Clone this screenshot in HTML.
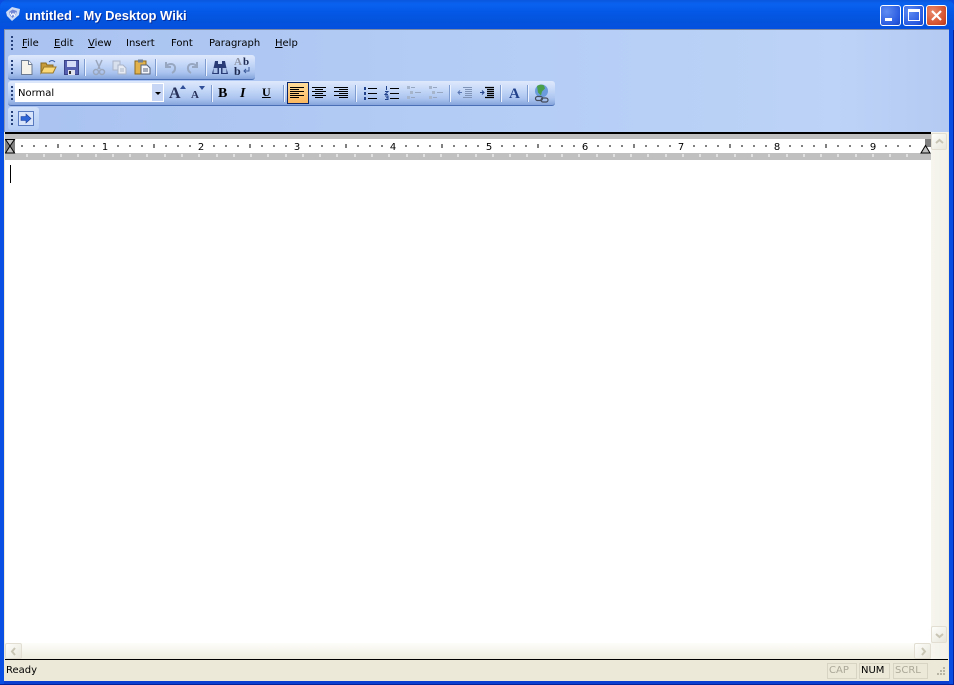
<!DOCTYPE html>
<html><head><meta charset="utf-8">
<style>
html,body{margin:0;padding:0;background:#fff}
#w{position:relative;width:954px;height:685px;overflow:hidden;background:#0a4be0;font-family:"DejaVu Sans","Liberation Sans",sans-serif;font-size:10px;color:#000}
#w div,#w svg,#w span{position:absolute}
.tb{background:linear-gradient(#dfe9fc,#c6d9f8 35%,#a9c3ef 75%,#86a5dc);border-radius:3px;border-bottom:1px solid #4a6fb4}
.m{top:37px;font-size:10px;line-height:13px;white-space:nowrap;color:#000}
.m u{text-decoration:underline}
.sep{width:1px;background:#7f9cd0;border-right:1px solid #eef4ff;height:17px}
.grip{width:2px;height:2px;background:#27417a;box-shadow:0 4px 0 #27417a,0 8px 0 #27417a,0 12px 0 #27417a}
.sb{top:663px;border:1px solid #d8d4c4;font-size:10px;line-height:14px;color:#aca899;padding-left:1px;box-sizing:border-box;height:16px}
.btn{border:1px solid #fff;border-radius:3px;box-sizing:border-box}
.sbtn{background:linear-gradient(135deg,#fdfdfb,#e8e6da);border:1px solid #e2dfd2;border-radius:2px;box-sizing:border-box}
</style></head><body><div id="w">
<!-- title bar -->
<div style="left:0;top:0;width:954px;height:30px;border-radius:7px 7px 0 0;background:linear-gradient(#0a57dc,#0a62f0 4px,#0458e6 12px,#0453dc 22px,#0550e0 30px)"></div>
<svg style="left:5px;top:6px" width="16" height="16" viewBox="0 0 16 16"><path d="M1 6L7 1l8 2-1 6-7 6-5-5z" fill="#cddbf5"/><path d="M4 6l3.500-2.500L12 5l-1 3.500L7.500 12 5 9.500z" fill="#7187d6"/><path d="M5 6.500l1.500 3 1.500-2 1.500 2 1-3" stroke="#fff" fill="none"/></svg>
<div style="left:25px;top:8px;font:bold 13px/16px 'Liberation Sans',sans-serif;color:#fff;white-space:nowrap;text-shadow:1px 1px 0 #0a2f9a">untitled - My Desktop Wiki</div>
<div class="btn" style="left:880px;top:5px;width:21px;height:21px;background:radial-gradient(circle at 30% 30%,#5f8cf2,#2a5be0 70%,#1a44c4)"><div style="left:4px;top:12px;width:7px;height:3px;background:#fff"></div></div>
<div class="btn" style="left:903px;top:5px;width:21px;height:21px;background:radial-gradient(circle at 30% 30%,#5f8cf2,#2a5be0 70%,#1a44c4)"><div style="left:4px;top:3px;width:12px;height:12px;border:1px solid #fff;border-top:3px solid #fff;box-sizing:border-box"></div></div>
<div class="btn" style="left:926px;top:5px;width:21px;height:21px;background:radial-gradient(circle at 30% 30%,#e8886a,#d5502c 70%,#b8381a)"><svg style="left:3px;top:3px" width="13" height="13" viewBox="0 0 13 13"><path d="M2 2l9 9M11 2l-9 9" stroke="#fff" stroke-width="2.200"/></svg></div>

<!-- client -->
<div style="left:4px;top:29px;width:945px;height:652px;background:#ece9d8"></div>
<div style="left:4px;top:29px;width:945px;height:1px;background:#7c8aa8"></div>
<div style="left:4px;top:30px;width:1px;height:102px;background:#8a97b4"></div>
<div style="left:5px;top:30px;width:944px;height:102px;background:linear-gradient(90deg,#a9c2f0,#b2ccf5 45%,#bdd3f7 88%,#b4caf2)"></div>

<!-- menu -->
<div class="grip" style="left:11px;top:36px"></div>
<div class="m" style="left:22px"><u>F</u>ile</div>
<div class="m" style="left:54px"><u>E</u>dit</div>
<div class="m" style="left:88px"><u>V</u>iew</div>
<div class="m" style="left:126px">Insert</div>
<div class="m" style="left:171px">Font</div>
<div class="m" style="left:209px">Paragraph</div>
<div class="m" style="left:275px"><u>H</u>elp</div>

<!-- toolbar 1 -->
<div class="tb" style="left:8px;top:55px;width:247px;height:24px"></div>
<div class="grip" style="left:11px;top:60px"></div>
<svg style="left:19px;top:59px" width="15" height="17" viewBox="0 0 15 17"><path d="M2.500 1.500h7l3.500 4v10h-10.500z" fill="#f6f4ea" stroke="#6c7a92"/><path d="M9.500 1.500v4h3.500" fill="#fff" stroke="#6c7a92"/></svg>
<svg style="left:40px;top:59px" width="17" height="16" viewBox="0 0 17 16"><path d="M1 4h5l1 2h6v3H4l-3 5z" fill="#c79b3a" stroke="#8a6a20"/><path d="M1 14l3-6h12l-3 6z" fill="#fbd978" stroke="#9c7a28"/><path d="M9 3c2-2 4-2 6 0" stroke="#3a5fa8" fill="none"/></svg>
<svg style="left:64px;top:60px" width="15" height="15" viewBox="0 0 15 15"><rect x=".5" y=".5" width="14" height="14" fill="#5560b0" stroke="#3a4288"/><rect x="3" y="1" width="9" height="6" fill="#d5def6"/><rect x="4" y="10" width="7" height="5" fill="#e0e2ee"/><rect x="5" y="11" width="2" height="3" fill="#333"/></svg>
<div class="sep" style="left:84px;top:59px"></div>
<svg style="left:92px;top:59px" width="14" height="17" viewBox="0 0 14 17"><path d="M4 1l4 9M10 1L6 10" stroke="#9aa6bc" stroke-width="1.500"/><circle cx="4" cy="13" r="2.500" fill="none" stroke="#9aa6bc" stroke-width="1.500"/><circle cx="10" cy="13" r="2.500" fill="none" stroke="#9aa6bc" stroke-width="1.500"/></svg>
<svg style="left:112px;top:60px" width="16" height="15" viewBox="0 0 16 15"><path d="M1 1h7v9H1z" fill="#d8e0ee" stroke="#aab4c8"/><path d="M6 5h5l3 3v6H6z" fill="#e6ebf4" stroke="#aab4c8"/><path d="M8 9h4M8 11h4" stroke="#aab4c8"/></svg>
<svg style="left:134px;top:59px" width="17" height="16" viewBox="0 0 17 16"><rect x="1" y="2" width="11" height="13" fill="#e2b34c" stroke="#8a6820"/><rect x="4" y="0.500" width="5" height="3" fill="#6f7f98"/><path d="M7 6h6l3 3v6H7z" fill="#f4f6fb" stroke="#55627c"/><path d="M9 10h5M9 12h5" stroke="#55627c"/></svg>
<div class="sep" style="left:155px;top:59px"></div>
<svg style="left:163px;top:60px" width="15" height="15" viewBox="0 0 15 15"><path d="M3 2v5h5M3 7c2-4 8-4 9 0 .5 3-1 5-3 6" fill="none" stroke="#97a7c2" stroke-width="2"/></svg>
<svg style="left:185px;top:60px" width="15" height="15" viewBox="0 0 15 15"><path d="M12 2v5H7M12 7c-2-4-8-4-9 0-.5 3 1 5 3 6" fill="none" stroke="#97a7c2" stroke-width="2"/></svg>
<div class="sep" style="left:205px;top:59px"></div>
<svg style="left:212px;top:60px" width="16" height="15" viewBox="0 0 16 15"><path d="M3 1h3v3h4V1h3l1 5 2 8H9V8H7v6H0l2-8z" fill="#2a3c78"/><rect x="1.500" y="8" width="4" height="5" fill="#a9c0e8"/><rect x="10.500" y="8" width="4" height="5" fill="#a9c0e8"/></svg>
<div style="left:234px;top:57px;font:bold 11px/10px 'Liberation Serif',serif;color:#8d93a4">A<span style="left:9px;top:0;color:#1e2a50">b</span></div>
<div style="left:234px;top:66px;font:bold 12px/10px 'Liberation Serif',serif;color:#1e2a50">b</div>
<svg style="left:242px;top:67px" width="9" height="8" viewBox="0 0 9 8"><path d="M7 0v4H2M4 2L2 4l2 2" stroke="#3d5a9a" fill="none"/></svg>

<!-- toolbar 2 -->
<div class="tb" style="left:8px;top:81px;width:547px;height:24px"></div>
<div class="grip" style="left:11px;top:86px"></div>
<div style="left:15px;top:83px;width:149px;height:19px;background:#fff"></div>
<div style="left:18px;top:87px;font-size:10px;line-height:13px;padding-top:0;margin-top:0"><span style="position:static">Normal</span></div>
<div style="left:152px;top:84px;width:11px;height:17px;background:#c6d6f4"></div>
<div style="left:155px;top:92px;width:0;height:0;border:3px solid transparent;border-top:3px solid #000"></div>
<div style="left:169px;top:85px;font:bold 16px/18px 'Liberation Serif',serif;color:#27315a">A</div>
<div style="left:180px;top:85px;width:0;height:0;border:3px solid transparent;border-bottom:4px solid #304f98;border-top:0"></div>
<div style="left:191px;top:88px;font:bold 11px/15px 'Liberation Serif',serif;color:#27315a">A</div>
<div style="left:199px;top:86px;width:0;height:0;border:3px solid transparent;border-top:4px solid #304f98;border-bottom:0"></div>
<div class="sep" style="left:211px;top:85px"></div>
<div style="left:218px;top:86px;font:bold 14px/15px 'Liberation Serif',serif">B</div>
<div style="left:240px;top:86px;font:italic bold 14px/15px 'Liberation Serif',serif">I</div>
<div style="left:262px;top:85px;font:bold 12px/15px 'Liberation Serif',serif;text-decoration:underline">U</div>
<div class="sep" style="left:283px;top:85px"></div>
<div style="left:287px;top:82px;width:22px;height:22px;box-sizing:border-box;background:linear-gradient(#fedc9a,#fbb860);border:1px solid #0a246a"></div>
<svg style="left:290px;top:86px" width="62" height="14" viewBox="0 0 62 14" stroke="#000" stroke-width="1"><path d="M0 1.500h14M0 3.500h9M0 5.500h14M0 7.500h9M0 9.500h14M0 11.500h9"/><path d="M22 1.500h14M25 3.500h8M22 5.500h14M25 7.500h8M22 9.500h14M25 11.500h8"/><path d="M44 1.500h14M49 3.500h9M44 5.500h14M49 7.500h9M44 9.500h14M49 11.500h9"/></svg>
<div class="sep" style="left:355px;top:85px"></div>
<svg style="left:362px;top:86px" width="16" height="14" viewBox="0 0 16 14"><path d="M6 2.500h9M6 7.500h9M6 12.500h9" stroke="#000"/><rect x="2" y="1" width="2" height="3" fill="#23428c"/><rect x="2" y="6" width="2" height="3" fill="#23428c"/><rect x="2" y="11" width="2" height="3" fill="#23428c"/></svg>
<svg style="left:384px;top:86px" width="16" height="14" viewBox="0 0 16 14"><path d="M6 2.500h9M6 7.500h9M6 12.500h9" stroke="#000"/><path d="M2.500 0v4M1 5.500h3l-3 3h3M1 10h3v3.500H1M2 11.700h2" stroke="#23428c" fill="none"/></svg>
<svg style="left:406px;top:86px" width="16" height="14" viewBox="0 0 16 14"><path d="M5 1.500h4M9 6.500h6M5 11.500h4" stroke="#97a7c2"/><rect x="1" y="0" width="3" height="3" fill="#a6b4cc"/><rect x="4" y="5" width="3" height="3" fill="#a6b4cc"/><rect x="1" y="10" width="3" height="3" fill="#a6b4cc"/></svg>
<svg style="left:428px;top:86px" width="16" height="14" viewBox="0 0 16 14"><path d="M5 1.500h4M9 6.500h6M5 11.500h4" stroke="#97a7c2"/><rect x="1" y="0" width="3" height="3" fill="#a6b4cc"/><rect x="4" y="5" width="3" height="3" fill="#a6b4cc"/><rect x="1" y="10" width="3" height="3" fill="#a6b4cc"/></svg>
<div class="sep" style="left:449px;top:85px"></div>
<svg style="left:457px;top:86px" width="16" height="14" viewBox="0 0 16 14"><path d="M6 1.500h9M8 3.500h7M8 5.500h7M8 7.500h7M8 9.500h7M6 11.500h9" stroke="#8094b8"/><path d="M5 6.500H1M3 4.500l-2 2 2 2" stroke="#5874b0" fill="none"/></svg>
<svg style="left:479px;top:86px" width="16" height="14" viewBox="0 0 16 14"><path d="M6 1.500h9M8 3.500h7M8 5.500h7M8 7.500h7M8 9.500h7M6 11.500h9" stroke="#000" stroke-width="1.200"/><path d="M1 6.500h4M3 4.500l2 2-2 2" stroke="#23428c" fill="none"/></svg>
<div class="sep" style="left:500px;top:85px"></div>
<div style="left:509px;top:86px;font:bold 15px/16px 'Liberation Serif',serif;color:#23428c">A</div>
<div class="sep" style="left:527px;top:85px"></div>
<svg style="left:533px;top:84px" width="18" height="19" viewBox="0 0 18 19"><circle cx="8.500" cy="7" r="6.500" fill="#6b9bdc"/><path d="M4 2c3-2 5-1.500 7-.5l1 3-3 3-1 4-3-3z" fill="#4aa04a"/><rect x="2.500" y="12.500" width="7" height="4" rx="2" fill="none" stroke="#444c5c" stroke-width="1.200"/><rect x="8" y="14" width="7" height="4" rx="2" fill="none" stroke="#444c5c" stroke-width="1.200"/></svg>

<!-- toolbar 3 -->
<div class="tb" style="left:8px;top:107px;width:31px;height:23px;border-bottom:0;background:linear-gradient(#d0e0fa,#b4cdf4)"></div>
<div class="grip" style="left:11px;top:111px"></div>
<svg style="left:18px;top:111px" width="16" height="15" viewBox="0 0 16 15"><rect x=".5" y=".5" width="15" height="14" fill="#d8e4fa" stroke="#5a7ac0"/><path d="M3 5.500h5V3l5 4.500-5 4.500V9.500H3z" fill="#2e66d8" stroke="#1a3c98" stroke-width=".6"/></svg>

<!-- ruler -->
<div style="left:5px;top:132px;width:926px;height:2px;background:#000"></div>
<div style="left:5px;top:134px;width:926px;height:26px;background:#c0c0c0"></div>
<div style="left:5px;top:139px;width:926px;height:14px;background:#fff"></div>
<svg style="left:5px;top:139px" width="926" height="21" viewBox="0 0 926 21">
<path d="M0 0h10v14H0z" fill="#808080"/><path d="M920 0h6v8h-6z" fill="#808080"/>
<path stroke="#000" d="M17 6v2M29 6v2M41 6v2M65 6v2M77 6v2M89 6v2M113 6v2M125 6v2M137 6v2M161 6v2M173 6v2M185 6v2M209 6v2M221 6v2M233 6v2M257 6v2M269 6v2M281 6v2M305 6v2M317 6v2M329 6v2M353 6v2M365 6v2M377 6v2M401 6v2M413 6v2M425 6v2M449 6v2M461 6v2M473 6v2M497 6v2M509 6v2M521 6v2M545 6v2M557 6v2M569 6v2M593 6v2M605 6v2M617 6v2M641 6v2M653 6v2M665 6v2M689 6v2M701 6v2M713 6v2M737 6v2M749 6v2M761 6v2M785 6v2M797 6v2M809 6v2M833 6v2M845 6v2M857 6v2M881 6v2M893 6v2M905 6v2"/>
<path stroke="#000" d="M53 5v4M149 5v4M245 5v4M341 5v4M437 5v4M533 5v4M629 5v4M725 5v4M821 5v4"/>
<path stroke="#fff" d="M22 15v3M39 15v3M56 15v3M73 15v3M91 15v3M108 15v3M125 15v3M142 15v3M160 15v3M177 15v3M194 15v3M212 15v3M229 15v3M246 15v3M263 15v3M281 15v3M298 15v3M315 15v3M332 15v3M350 15v3M367 15v3M384 15v3M402 15v3M419 15v3M436 15v3M453 15v3M471 15v3M488 15v3M505 15v3M522 15v3M540 15v3M557 15v3M574 15v3M592 15v3M609 15v3M626 15v3M643 15v3M661 15v3M678 15v3M695 15v3M712 15v3M730 15v3M747 15v3M764 15v3M782 15v3M799 15v3M816 15v3M833 15v3M851 15v3M868 15v3M885 15v3M902 15v3"/>
<path d="M.500 .500h9l-4.500 6.500 4.500 7h-9l4.500-7z" fill="#c0c0c0" stroke="#000"/>
<path d="M920.500 6.500l4.500 7.500h-9z" fill="#c0c0c0" stroke="#000"/>
<g font-family="DejaVu Sans" font-size="10" fill="#000" text-anchor="middle"><text x="100" y="11">1</text><text x="196" y="11">2</text><text x="292" y="11">3</text><text x="388" y="11">4</text><text x="484" y="11">5</text><text x="580" y="11">6</text><text x="676" y="11">7</text><text x="772" y="11">8</text><text x="868" y="11">9</text></g>
</svg>

<!-- document -->
<div style="left:5px;top:160px;width:926px;height:483px;background:#fff"></div>
<div style="left:10px;top:165px;width:1px;height:18px;background:#000"></div>

<!-- vertical scrollbar -->
<div style="left:931px;top:132px;width:17px;height:527px;background:linear-gradient(90deg,#f6f5ee,#f3f1e8)"></div>
<div class="sbtn" style="left:931px;top:133px;width:16px;height:17px"><svg style="left:3px;top:4px" width="9" height="7" viewBox="0 0 9 7"><path d="M1 5l3.500-3L8 5" fill="none" stroke="#c8c5b4" stroke-width="2"/></svg></div>
<div class="sbtn" style="left:931px;top:626px;width:16px;height:17px"><svg style="left:3px;top:5px" width="9" height="7" viewBox="0 0 9 7"><path d="M1 2l3.500 3L8 2" fill="none" stroke="#c8c5b4" stroke-width="2"/></svg></div>

<!-- horizontal scrollbar -->
<div style="left:5px;top:643px;width:926px;height:16px;background:linear-gradient(#fdfdfa,#eeecdf)"></div>
<div class="sbtn" style="left:5px;top:643px;width:17px;height:16px"><svg style="left:4px;top:3px" width="7" height="9" viewBox="0 0 7 9"><path d="M5 1L2 4.500 5 8" fill="none" stroke="#c8c5b4" stroke-width="2"/></svg></div>
<div class="sbtn" style="left:914px;top:643px;width:17px;height:16px"><svg style="left:5px;top:3px" width="7" height="9" viewBox="0 0 7 9"><path d="M2 1l3 3.500L2 8" fill="none" stroke="#c8c5b4" stroke-width="2"/></svg></div>

<!-- status bar -->
<div style="left:5px;top:659px;width:943px;height:1px;background:#000"></div>
<div style="left:6px;top:664px;font-size:10px;line-height:13px">Ready</div>
<div class="sb" style="left:827px;width:30px">CAP</div>
<div class="sb" style="left:859px;width:31px;color:#000">NUM</div>
<div class="sb" style="left:893px;width:35px">SCRL</div>
<svg style="left:935px;top:666px" width="12" height="12" viewBox="0 0 12 12" fill="#b8b5a4"><rect x="8" y="1" width="2" height="2"/><rect x="5" y="4" width="2" height="2"/><rect x="8" y="4" width="2" height="2"/><rect x="2" y="7" width="2" height="2"/><rect x="5" y="7" width="2" height="2"/><rect x="8" y="7" width="2" height="2"/></svg>
<div style="left:0;top:681px;width:954px;height:4px;background:#0b3fd0"></div>
<div style="left:0;top:30px;width:4px;height:655px;background:#0a4fe4"></div>
<div style="left:949px;top:30px;width:5px;height:655px;background:#0a4be0"></div>
<div style="left:953px;top:30px;width:1px;height:655px;background:#00209c"></div>
<div style="left:0;top:684px;width:954px;height:1px;background:#00209c"></div>
</div></body></html>
